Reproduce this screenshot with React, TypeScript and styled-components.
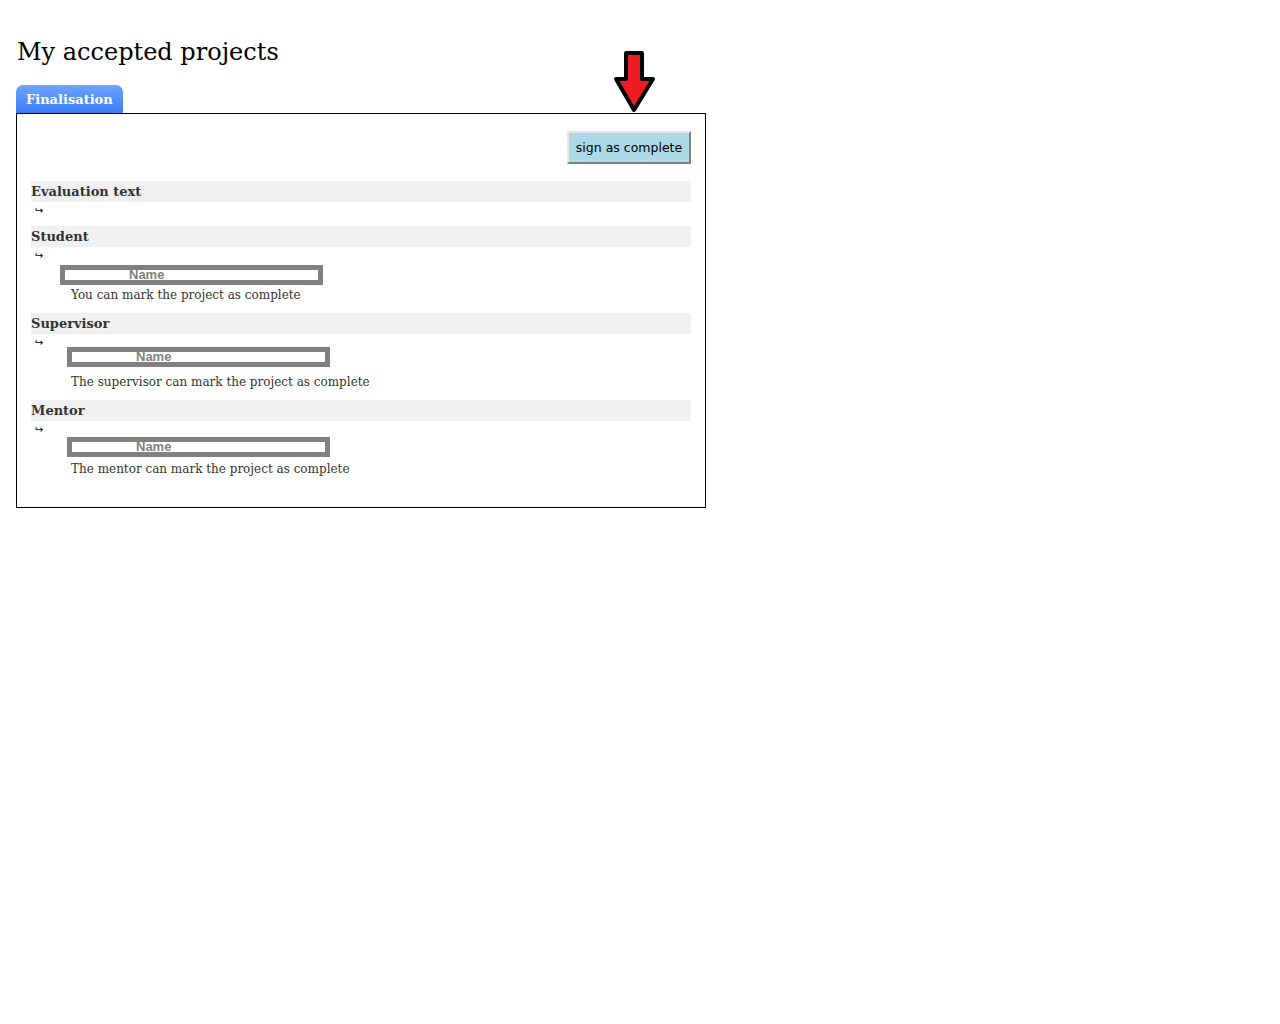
import React from "react";
import styled, { createGlobalStyle } from "styled-components";

const Global = createGlobalStyle`
  html, body { margin: 0; padding: 0; background: #fff; }
  body { font-family: "DejaVu Serif", Georgia, serif; color: #333; }
`;

const Page = styled.div`
  padding: 0 16px;
  width: 690px;
`;

const Title = styled.h1`
  margin: 0 0 17px;
  padding: 36px 0 0 1px;
  font-family: "DejaVu Serif", Georgia, serif;
  font-weight: normal;
  font-size: 24px;
  line-height: 32px;
  color: #000;
`;

const TabArea = styled.div`
  position: relative;
`;

const TabBar = styled.div`
  display: flex;
`;

const Tab = styled.div`
  height: 28px;
  box-sizing: border-box;
  padding: 0 10px;
  display: flex;
  align-items: center;
  border-radius: 7px 7px 0 0;
  background: linear-gradient(#6fa5ff, #3a7bf6);
  color: #fff;
  font-weight: bold;
  font-size: 13px;
`;

const Arrow = styled.svg`
  position: absolute;
  left: 597px;
  top: -35px;
`;

const Panel = styled.div`
  border: 1px solid #000;
  padding: 17px 14px 20px;
`;

const ButtonRow = styled.div`
  display: flex;
  justify-content: flex-end;
  margin-bottom: 17px;
`;

const SignButton = styled.button`
  height: 33px;
  width: 124px;
  padding: 0;
  background: #add8e6;
  border: 2px solid;
  border-color: #e8e8e8 #7f7f7f #7f7f7f #e8e8e8;
  font-family: "DejaVu Sans", Verdana, sans-serif;
  font-size: 12.5px;
  color: #000;
`;

const Section = styled.div<{ $gap: number }>`
  margin-bottom: ${(p) => p.$gap}px;
`;

const Header = styled.div`
  background: #f0f0f0;
  height: 21px;
  line-height: 21px;
  font-weight: bold;
  font-size: 13px;
  color: #333;
`;

const Hook = styled.div`
  height: 16px;
  line-height: 17px;
  padding-left: 4px;
  font-family: "DejaVu Sans", sans-serif;
  font-size: 10px;
  color: #000;
`;

const Field = styled.div`
  position: relative;
  padding-left: 40px;
  font-size: 12px;
  line-height: 20px;
  color: #333;
`;

const Spacer = styled.div`
  height: 22px;
`;

const NameBox = styled.div<{ $left: number; $top: number }>`
  position: absolute;
  left: ${(p) => p.$left}px;
  top: ${(p) => p.$top}px;
  width: 263px;
  height: 20px;
  box-sizing: border-box;
  border: 5px solid #808080;
  background: #fff;
  padding-left: 64px;
  overflow: hidden;
  font-family: "Liberation Sans", Arial, sans-serif;
  font-weight: bold;
  font-size: 13px;
  line-height: 9px;
  color: #808080;
`;

type FieldProps = { left: number; top: number; text: string };

const PersonField = ({ left, top, text }: FieldProps) => (
  <Field>
    <Spacer />
    <div>{text}</div>
    <NameBox $left={left} $top={top}>Name</NameBox>
  </Field>
);

export default function App() {
  return (
    <>
      <Global />
      <Page>
        <Title>My accepted projects</Title>
        <TabArea>
          <TabBar>
            <Tab>Finalisation</Tab>
          </TabBar>
          <Arrow width="44" height="64" viewBox="0 0 44 64">
            <polygon
              points="13,3 29,3 29,29 40,29 21,60 3,29 13,29"
              fill="#ed1c24"
              stroke="#000"
              strokeWidth="4"
              strokeLinejoin="round"
            />
          </Arrow>
          <Panel>
            <ButtonRow>
              <SignButton>sign as complete</SignButton>
            </ButtonRow>
            <Section $gap={8}>
              <Header>Evaluation text</Header>
              <Hook>↪</Hook>
            </Section>
            <Section $gap={8}>
              <Header>Student</Header>
              <Hook>↪</Hook>
              <PersonField left={29} top={2} text="You can mark the project as complete" />
            </Section>
            <Section $gap={8}>
              <Header>Supervisor</Header>
              <Hook>↪</Hook>
              <PersonField left={36} top={-3} text="The supervisor can mark the project as complete" />
            </Section>
            <Section $gap={8}>
              <Header>Mentor</Header>
              <Hook>↪</Hook>
              <PersonField left={36} top={0} text="The mentor can mark the project as complete" />
            </Section>
          </Panel>
        </TabArea>
      </Page>
    </>
  );
}
